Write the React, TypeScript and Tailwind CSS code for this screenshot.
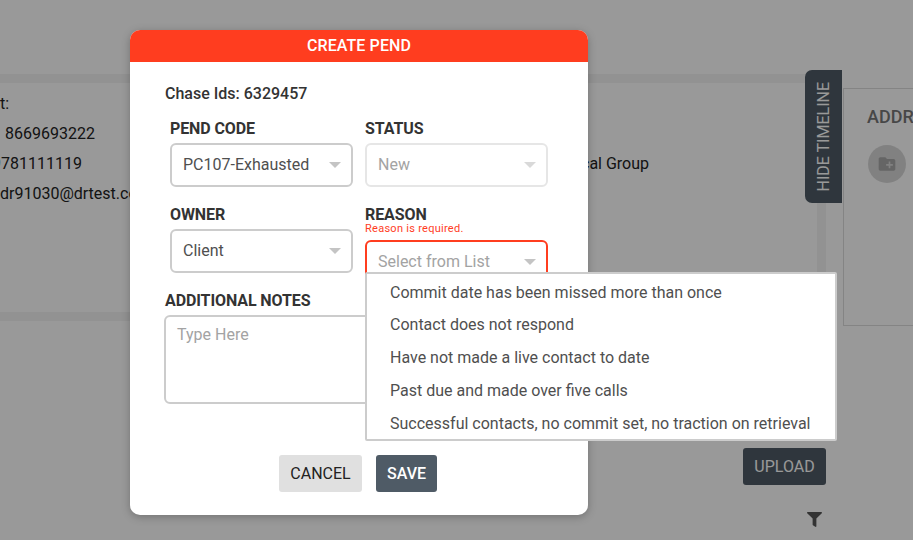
import { FaFilter } from "react-icons/fa";
import { MdCreateNewFolder } from "react-icons/md";

const roboto = "font-['Roboto',sans-serif]";

function Caret({ light }: { light?: boolean }) {
  return (
    <svg width="12" height="6" viewBox="0 0 12 6" className="shrink-0">
      <path d="M0 0h12L6 6z" fill={light ? "#d9d9d9" : "#c4c4c4"} />
    </svg>
  );
}

function Select({
  label,
  value,
  muted,
  disabled,
  error,
}: {
  label: string;
  value: string;
  muted?: boolean;
  disabled?: boolean;
  error?: string;
}) {
  return (
    <div className="relative flex flex-col">
      <div className="text-[16px] leading-[20px] font-bold text-[#333] tracking-[-0.1px]">{label}</div>
      {error ? (
        <div className="text-[11px] leading-[11px] text-[#ff3d1f] mt-[-2px] mb-[6px] tracking-[0.27px]">{error}</div>
      ) : null}
      <div
        className={`h-[44px] w-[183px] rounded-[6px] border-2 flex items-center justify-between pl-[11px] pr-[10px] text-[16px] ${
          error ? "border-[#ff3d1f]" : disabled ? "mt-[4px] border-[#e6e6e6]" : "mt-[4px] border-[#ccc]"
        } ${muted ? "text-[#a3a3a3]" : "text-[#4f4f4f]"}`}
      >
        <span>{value}</span>
        <Caret light={disabled} />
      </div>
    </div>
  );
}

const reasons = [
  "Commit date has been missed more than once",
  "Contact does not respond",
  "Have not made a live contact to date",
  "Past due and made over five calls",
  "Successful contacts, no commit set, no traction on retrieval",
];

export default function App() {
  return (
    <div className={`relative w-[913px] h-[540px] overflow-hidden bg-white ${roboto}`}>
      <div className="flex pt-[74px] items-start">
        <div className="ml-[-20px] w-[846px] h-[247px] border-[9px] border-[#f3f3f3] shrink-0 pl-[11px] pt-[6px] text-[16px] text-[#222] relative overflow-hidden">
          <div className="leading-[30px] whitespace-nowrap">
            <div>t:</div>
            <div className="ml-[5px]">8669693222</div>
            <div className="ml-[-8px]">9781111119</div>
            <div>dr91030@drtest.com</div>
          </div>
        </div>
        <div className="mt-[14px] ml-[17px] w-[100px] h-[238px] border border-[#ddd] shrink-0 pl-[23px] pt-[16px]">
          <div className="text-[18px] font-medium text-[#777] leading-[24px]">ADDRESS</div>
          <div className="mt-[16px] ml-[1px] w-[38px] h-[38px] rounded-full bg-[#d8d8d8] flex items-center justify-center text-[#a8a8a8]">
            <MdCreateNewFolder size={20} />
          </div>
        </div>
      </div>
      <div className="flex justify-end pr-[87px] mt-[122px]">
        <button className="w-[83px] h-[37px] rounded-[3px] bg-[#4f5b66] text-white text-[16px]">UPLOAD</button>
      </div>
      <div className="flex justify-end pr-[91px] mt-[27px] text-[#555]">
        <FaFilter size={15} />
      </div>
      <div className="absolute left-[581px] top-[154px] text-[16px] leading-[20px] text-[#222]">cal Group</div>
      <div className="absolute left-[805px] top-[70px] w-[37px] h-[133px] rounded-l-[7px] bg-[#4f5b66] text-white text-[16px] flex items-center justify-center">
        <span className="[writing-mode:vertical-rl] rotate-180 whitespace-nowrap">HIDE TIMELINE</span>
      </div>

      <div className="absolute inset-0 bg-black/40" />

      <div className="absolute left-[130px] top-[30px] w-[458px] h-[485px] rounded-[10px] bg-white shadow-[0_2px_8px_rgba(0,0,0,0.25)] flex flex-col">
        <div className="h-[32px] rounded-t-[10px] bg-[#ff3d1f] text-white text-[16px] tracking-[0.1px] font-medium flex items-center justify-center shrink-0">
          CREATE PEND
        </div>
        <div className="flex flex-col pl-[35px] pt-[22px]">
          <div className="text-[16px] leading-[20px] font-medium text-[#333]">Chase Ids: 6329457</div>
          <div className="ml-[5px] mt-[15px] grid grid-cols-[183px_183px] gap-x-[12px]">
            <Select label="PEND CODE" value="PC107-Exhausted" />
            <Select label="STATUS" value="New" muted disabled />
            <div className="mt-[18px]">
              <Select label="OWNER" value="Client" />
            </div>
            <div className="mt-[18px] relative">
              <Select label="REASON" value="Select from List" muted error="Reason is required." />
              <div className="absolute z-10 left-0 top-[67px] w-[472px] h-[169px] bg-white border-2 border-[#ccc] rounded-[2px] flex flex-col text-[16px] text-[#4f4f4f] pl-[23px] pt-[1.7px] whitespace-nowrap">
                {reasons.map((r) => (
                  <div key={r} className="h-[32.75px] leading-[33px]">
                    {r}
                  </div>
                ))}
              </div>
            </div>
          </div>
          <div className="mt-[7px] text-[16px] leading-[20px] font-bold text-[#333] tracking-[-0.1px]">ADDITIONAL NOTES</div>
          <div className="mt-[4px] ml-[-1px] w-[385px] h-[89px] rounded-[6px] border-2 border-[#ccc] pl-[11px] pt-[7px] text-[16px] leading-[22px] text-[#a3a3a3]">
            Type Here
          </div>
          <div className="mt-[51px] flex gap-[14px] pl-[114px]">
            <button className="w-[83px] h-[37px] rounded-[3px] bg-[#e0e0e0] text-[16px] text-[#222]">CANCEL</button>
            <button className="w-[61px] h-[37px] rounded-[3px] bg-[#4f5b66] text-[16px] font-medium text-white">SAVE</button>
          </div>
        </div>
      </div>
    </div>
  );
}
